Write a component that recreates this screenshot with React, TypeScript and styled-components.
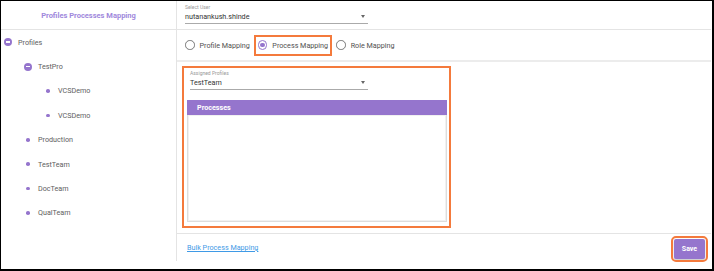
import React from 'react';
import styled, { createGlobalStyle } from 'styled-components';

const Global = createGlobalStyle`
  html, body { margin: 0; padding: 0; background: #fff; }
  body { font-family: Roboto, "Liberation Sans", sans-serif; font-size: 7.2px; color: #444; }
  * { box-sizing: border-box; }
`;

const PURPLE = '#9575cd';
const ORANGE = '#f47a3c';
const LINE = '#e4e4e4';

const Frame = styled.div`
  width: 714px;
  height: 271px;
  border-style: solid;
  border-color: #000;
  border-width: 1px 2px 2px 1px;
  background: #fff;
  overflow: hidden;
`;

const Layout = styled.div`
  display: flex;
  height: 260px;
`;

const Sidebar = styled.aside`
  width: 176px;
  flex: none;
  border-right: 1px solid ${LINE};
  display: flex;
  flex-direction: column;
`;

const SideHeader = styled.div`
  height: 29px;
  flex: none;
  border-bottom: 1px solid ${LINE};
  display: flex;
  align-items: center;
  justify-content: center;
  color: #a088dc;
  font-weight: 700;
  font-size: 7.5px;
`;

const Tree = styled.ul`
  list-style: none;
  margin: 0;
  padding: 0;
`;

const TreeRow = styled.li<{ $indent: number }>`
  height: 24.4px;
  display: flex;
  align-items: center;
  gap: 6px;
  padding-left: ${p => p.$indent}px;
  color: #606060;
`;

const Marker = styled.span`
  width: 8px;
  height: 8px;
  flex: none;
  display: flex;
  align-items: center;
  justify-content: center;
`;

const MinusCircle = styled.span`
  width: 8px;
  height: 8px;
  border-radius: 50%;
  background: ${PURPLE};
  display: flex;
  align-items: center;
  justify-content: center;
  &::after {
    content: '';
    width: 4px;
    height: 1.4px;
    background: #fff;
  }
`;

const Dot = styled.span`
  width: 3.6px;
  height: 3.6px;
  border-radius: 50%;
  background: ${PURPLE};
`;

const Main = styled.main`
  flex: 1;
  display: flex;
  flex-direction: column;
  margin-right: 1px;
`;

const TopBar = styled.div`
  height: 29px;
  flex: none;
  border-bottom: 1px solid ${LINE};
  padding: 4px 0 0 8px;
`;

const SelectField = styled.div<{ $width: number }>`
  width: ${p => p.$width}px;
`;

const FieldLabel = styled.div`
  font-size: 5px;
  line-height: 5px;
  color: #999;
`;

const FieldValue = styled.div`
  height: 14px;
  display: flex;
  align-items: center;
  justify-content: space-between;
  border-bottom: 1px solid #aaa;
  color: #333;
  padding-right: 3px;
`;

const Caret = styled.span`
  width: 0;
  height: 0;
  border-left: 2.5px solid transparent;
  border-right: 2.5px solid transparent;
  border-top: 3px solid #666;
`;

const RadioRow = styled.div`
  height: 32px;
  flex: none;
  border-bottom: 2px solid #ececec;
  display: flex;
  align-items: center;
  padding-left: 4px;
`;

const RadioOption = styled.label<{ $highlight?: boolean }>`
  height: 21px;
  display: flex;
  align-items: center;
  gap: 5px;
  padding: 0 2px;
  border: 2px solid ${p => (p.$highlight ? ORANGE : 'transparent')};
  color: #505050;
`;

const RadioCircle = styled.span<{ $checked?: boolean }>`
  width: 9.5px;
  height: 9.5px;
  border-radius: 50%;
  border: 1px solid ${p => (p.$checked ? PURPLE : '#777')};
  display: flex;
  align-items: center;
  justify-content: center;
  &::after {
    content: '';
    width: 4.5px;
    height: 4.5px;
    border-radius: 50%;
    background: ${p => (p.$checked ? PURPLE : 'transparent')};
  }
`;

const Content = styled.div`
  flex: 1;
  padding: 4px 0 5px 5px;
`;

const HighlightBox = styled.section`
  width: 269px;
  height: 162px;
  border: 2px solid ${ORANGE};
  padding: 3px 2px 4px 3px;
  display: flex;
  flex-direction: column;
`;

const BoxSelect = styled(SelectField)`
  margin-left: 3px;
`;

const Table = styled.div`
  margin-top: 10px;
  flex: 1;
  display: flex;
  flex-direction: column;
`;

const TableHead = styled.div`
  height: 15px;
  background: ${PURPLE};
  color: #fff;
  font-weight: 700;
  display: flex;
  align-items: center;
  padding-left: 10px;
`;

const TableBody = styled.div`
  flex: 1;
  border: 1px solid #ddd;
  border-top: none;
  box-shadow: inset 0 0 0 1px #f1f1f1;
`;

const Footer = styled.footer`
  height: 28px;
  flex: none;
  border-top: 1px solid ${LINE};
  display: flex;
  align-items: center;
  justify-content: space-between;
  padding: 0 6px 0 10px;
`;

const Link = styled.a`
  color: #3f9ae6;
  text-decoration: underline;
  cursor: pointer;
`;

const SaveButton = styled.button`
  width: 31px;
  height: 20px;
  margin-top: 2px;
  border: none;
  border-radius: 2px;
  background: ${PURPLE};
  color: #fff;
  font-family: inherit;
  font-size: 7px;
  font-weight: 700;
  outline: 2px solid ${ORANGE};
  outline-offset: 1px;
  box-shadow: 0 1px 2px rgba(0, 0, 0, 0.25);
  padding: 0;
`;

type Node = { label: string; indent: number; kind: 'minus' | 'dot' };

const nodes: Node[] = [
  { label: 'Profiles', indent: 3, kind: 'minus' },
  { label: 'TestPro', indent: 23, kind: 'minus' },
  { label: 'VCSDemo', indent: 43, kind: 'dot' },
  { label: 'VCSDemo', indent: 43, kind: 'dot' },
  { label: 'Production', indent: 23, kind: 'dot' },
  { label: 'TestTeam', indent: 23, kind: 'dot' },
  { label: 'DocTeam', indent: 23, kind: 'dot' },
  { label: 'QualTeam', indent: 23, kind: 'dot' },
];

export default function App() {
  return (
    <>
      <Global />
      <Frame>
        <Layout>
          <Sidebar>
            <SideHeader>Profiles Processes Mapping</SideHeader>
            <Tree>
              {nodes.map((n, i) => (
                <TreeRow key={i} $indent={n.indent}>
                  <Marker>{n.kind === 'minus' ? <MinusCircle /> : <Dot />}</Marker>
                  {n.label}
                </TreeRow>
              ))}
            </Tree>
          </Sidebar>
          <Main>
            <TopBar>
              <SelectField $width={183}>
                <FieldLabel>Select User</FieldLabel>
                <FieldValue>
                  nutanankush.shinde
                  <Caret />
                </FieldValue>
              </SelectField>
            </TopBar>
            <RadioRow>
              <RadioOption>
                <RadioCircle />
                Profile Mapping
              </RadioOption>
              <RadioOption $highlight>
                <RadioCircle $checked />
                Process Mapping
              </RadioOption>
              <RadioOption>
                <RadioCircle />
                Role Mapping
              </RadioOption>
            </RadioRow>
            <Content>
              <HighlightBox>
                <BoxSelect $width={178}>
                  <FieldLabel>Assigned Profiles</FieldLabel>
                  <FieldValue>
                    TestTeam
                    <Caret />
                  </FieldValue>
                </BoxSelect>
                <Table>
                  <TableHead>Processes</TableHead>
                  <TableBody />
                </Table>
              </HighlightBox>
            </Content>
            <Footer>
              <Link>Bulk Process Mapping</Link>
              <SaveButton>Save</SaveButton>
            </Footer>
          </Main>
        </Layout>
      </Frame>
    </>
  );
}
